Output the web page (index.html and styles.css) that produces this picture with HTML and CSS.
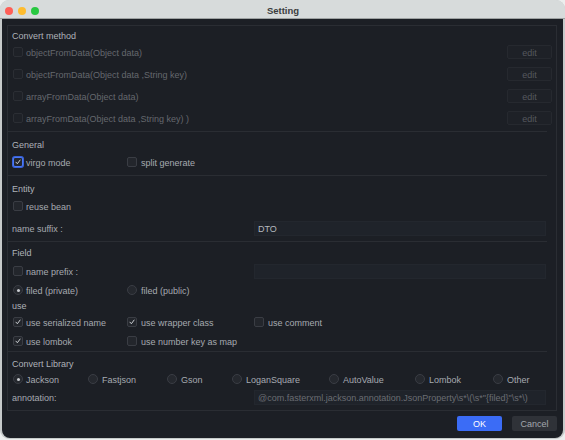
FILE: index.html
```html
<!DOCTYPE html>
<html>
<head>
<meta charset="utf-8">
<link rel="stylesheet" href="styles.css">
</head>
<body>
<div class="window">
  <div class="titlebar">
    <div class="lights">
      <span class="light red"></span>
      <span class="light yellow"></span>
      <span class="light green"></span>
    </div>
    <div class="title">Setting</div>
  </div>
  <div class="content">
    <div class="panel">
      <div class="head head-first">Convert method</div>
      <div class="mrow">
        <span class="cb disabled"></span><span class="mtext">objectFromData(Object data)</span>
        <span class="edit">edit</span>
      </div>
      <div class="mrow">
        <span class="cb disabled"></span><span class="mtext">objectFromData(Object data ,String key)</span>
        <span class="edit">edit</span>
      </div>
      <div class="mrow">
        <span class="cb disabled"></span><span class="mtext">arrayFromData(Object data)</span>
        <span class="edit">edit</span>
      </div>
      <div class="mrow">
        <span class="cb disabled"></span><span class="mtext">arrayFromData(Object data ,String key) )</span>
        <span class="edit">edit</span>
      </div>

      <div class="sep"></div>
      <div class="head">General</div>
      <div class="grow h22">
        <label class="opt c1"><span class="cb focus"><svg viewBox="0 0 10 10"><polyline points="2.4,5.2 4.2,7.2 7.6,2.6"/></svg></span><span class="txt">virgo mode</span></label>
        <label class="opt"><span class="cb"></span><span class="txt">split generate</span></label>
      </div>

      <div class="sep"></div>
      <div class="head">Entity</div>
      <div class="grow h22">
        <label class="opt c1"><span class="cb"></span><span class="txt">reuse bean</span></label>
      </div>
      <div class="grow h22">
        <span class="label txt">name suffix :</span>
        <span></span>
        <span class="field"><span class="ftext">DTO</span></span>
      </div>

      <div class="sep"></div>
      <div class="head head-tight">Field</div>
      <div class="grow h24">
        <label class="opt c1"><span class="cb"></span><span class="txt">name prefix :</span></label>
        <span></span>
        <span class="field"></span>
      </div>
      <div class="grow h14">
        <label class="opt c1"><span class="rb on"></span><span class="txt">filed (private)</span></label>
        <label class="opt"><span class="rb"></span><span class="txt">filed (public)</span></label>
      </div>
      <div class="sub">use</div>
      <div class="grow h18">
        <label class="opt c1"><span class="cb"><svg viewBox="0 0 10 10"><polyline points="2.4,5.2 4.2,7.2 7.6,2.6"/></svg></span><span class="txt">use serialized name</span></label>
        <label class="opt"><span class="cb"><svg viewBox="0 0 10 10"><polyline points="2.4,5.2 4.2,7.2 7.6,2.6"/></svg></span><span class="txt">use wrapper class</span></label>
        <label class="opt"><span class="cb"></span><span class="txt">use comment</span></label>
      </div>
      <div class="grow h20">
        <label class="opt c1"><span class="cb"><svg viewBox="0 0 10 10"><polyline points="2.4,5.2 4.2,7.2 7.6,2.6"/></svg></span><span class="txt">use lombok</span></label>
        <label class="opt"><span class="cb"></span><span class="txt">use number key as map</span></label>
      </div>

      <div class="sep sep-flush"></div>
      <div class="head head-lib">Convert Library</div>
      <div class="librow">
        <label class="opt c1"><span class="rb on"></span><span class="txt">Jackson</span></label>
        <label class="opt"><span class="rb"></span><span class="txt">Fastjson</span></label>
        <label class="opt"><span class="rb"></span><span class="txt">Gson</span></label>
        <label class="opt"><span class="rb"></span><span class="txt">LoganSquare</span></label>
        <label class="opt"><span class="rb"></span><span class="txt">AutoValue</span></label>
        <label class="opt"><span class="rb"></span><span class="txt">Lombok</span></label>
        <label class="opt"><span class="rb"></span><span class="txt">Other</span></label>
      </div>
      <div class="grow h18">
        <span class="label txt">annotation:</span>
        <span></span>
        <span class="field"><span class="ftext dim">@com.fasterxml.jackson.annotation.JsonProperty\s*\(\s*"{filed}"\s*\)</span></span>
      </div>
    </div>
    <div class="buttons">
      <span class="btn ok">OK</span>
      <span class="btn cancel">Cancel</span>
    </div>
  </div>
</div>
</body>
</html>
```

FILE: styles.css
```css
* { box-sizing: border-box; }
html, body { margin: 0; padding: 0; }
body {
  background: #eceeee;
  width: 565px;
  height: 440px;
  font-family: "Liberation Sans", Arial, sans-serif;
  font-size: 9px;
  overflow: hidden;
}
.window {
  width: 565px;
  height: 439px;
  border-radius: 9px;
  overflow: hidden;
  background: #c6caca;
  padding: 0 2px 1px 2px;
  display: flex;
  flex-direction: column;
}
.titlebar {
  height: 19px;
  margin: 0 -2px;
  background: #d7dbdb;
  border-bottom: 1px solid #9ea2a2;
  position: relative;
  display: flex;
  align-items: center;
  justify-content: center;
  flex: none;
}
.lights {
  position: absolute;
  left: 5px;
  top: 7px;
  display: flex;
  gap: 5px;
}
.light {
  width: 8px;
  height: 8px;
  border-radius: 50%;
  display: block;
}
.red { background: #fe5f57; }
.yellow { background: #febc2e; }
.green { background: #28c840; }
.title {
  font-weight: bold;
  font-size: 9.5px;
  color: #3b3d3e;
  margin-left: 1px;
  padding-top: 2px;
}
.content {
  flex: 1;
  background: #1c1f25;
  border-radius: 0 0 8px 8px;
  padding: 6px 6px 0 5px;
  display: flex;
  flex-direction: column;
}
.panel {
  border: 1px solid #2a2d33;
  height: 386px;
  padding: 0 4px 0 4px;
  color: #a6aab0;
}
.head {
  color: #aeb2b8;
  line-height: 12px;
  padding-top: 7px;
}
.head-first { padding-top: 4px; height: 15px; }
.head-tight { padding-top: 5px; }
.head-lib { padding-top: 6px; }
.sub {
  color: #aeb2b8;
  line-height: 16px;
  height: 16px;
  padding-top: 1px;
}
.sep {
  height: 1px;
  background: #2a2d33;
  margin: 2px 5px 0 -4px;
}
.sep-flush { margin-top: 0; }
.mrow {
  height: 22px;
  display: flex;
  align-items: center;
  padding-left: 1px;
}
.mtext {
  color: #65686e;
  margin-left: 3px;
  flex: 1;
  padding-top: 2px;
}
.txt { padding-top: 2px; }
.edit {
  width: 45px;
  height: 14px;
  border: 1px solid #26292f;
  background: #1e2127;
  color: #55585e;
  border-radius: 2px;
  display: flex;
  align-items: center;
  justify-content: center;
  padding-top: 1px;
}
.cb {
  width: 10px;
  height: 10px;
  border: 1px solid #3a3d44;
  background: #23262c;
  border-radius: 2px;
  display: inline-flex;
  align-items: center;
  justify-content: center;
  flex: none;
}
.cb.disabled {
  border-color: #2b2e34;
  background: #1e2127;
}
.cb svg {
  width: 10px;
  height: 10px;
  fill: none;
  stroke: #d0d3d7;
  stroke-width: 1.2;
  stroke-linecap: round;
  stroke-linejoin: round;
}
.cb.focus {
  border: 1px solid #4a78f6;
  box-shadow: 0 0 0 1px #3a63d8;
  background: #23262c;
}
.rb {
  width: 10px;
  height: 10px;
  border: 1px solid #3a3d44;
  background: #25282e;
  border-radius: 50%;
  display: inline-flex;
  align-items: center;
  justify-content: center;
  flex: none;
}
.rb.on::after {
  content: "";
  width: 3px;
  height: 3px;
  border-radius: 50%;
  background: #c9ccd0;
}
.grow {
  display: grid;
  grid-template-columns: 115px 127px 1fr;
  align-items: center;
}
.h14 { height: 14px; }
.h18 { height: 18px; }
.h20 { height: 20px; }
.h22 { height: 22px; }
.h24 { height: 24px; }
.opt {
  display: flex;
  align-items: center;
  gap: 4px;
  white-space: nowrap;
}
.opt.c1 { margin-left: 1px; gap: 3px; }
.label { color: #a6aab0; }
.field {
  height: 15px;
  margin-right: 6px;
  background: #1f232a;
  border: 1px solid #23272e;
  display: flex;
  align-items: center;
  padding: 1px 0 0 3px;
  overflow: hidden;
}
.ftext { color: #b5b9bf; white-space: nowrap; }
.ftext.dim { color: #6a6d73; }
.librow {
  height: 18px;
  display: grid;
  grid-template-columns: 76px 79px 65px 97px 86px 78px 1fr;
  align-items: center;
}
.buttons {
  display: flex;
  justify-content: flex-end;
  gap: 10px;
  margin-top: 5px;
}
.btn {
  width: 45px;
  height: 15px;
  border-radius: 2px;
  display: flex;
  align-items: center;
  justify-content: center;
  font-size: 9px;
  padding-top: 1px;
}
.ok { background: #3b6cf6; color: #ffffff; }
.cancel { background: #2f3238; color: #a3a7ad; }
```
